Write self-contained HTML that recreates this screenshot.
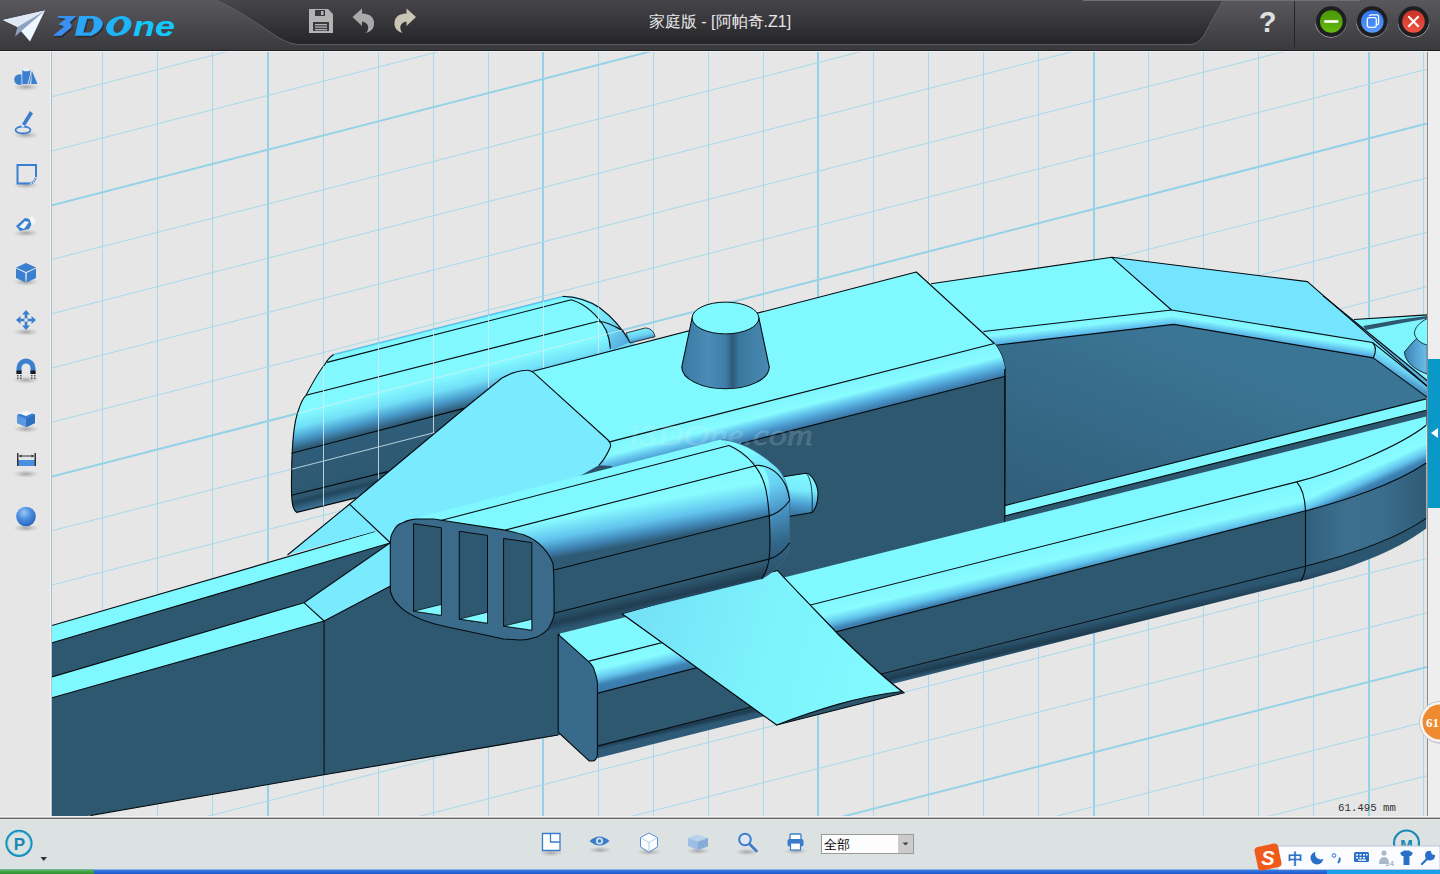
<!DOCTYPE html>
<html><head><meta charset="utf-8">
<style>
html,body{margin:0;padding:0;width:1440px;height:874px;overflow:hidden;background:#e6e6e6;font-family:"Liberation Sans",sans-serif;}
svg{position:absolute;left:0;top:0;display:block}
.g{stroke:#a6d9ea;stroke-width:1;fill:none}
.gt{stroke:#94d2e8;stroke-width:2;fill:none}
.e{stroke:#0a1a22;stroke-width:1;fill:none}
</style></head><body>
<svg width="1440" height="874" viewBox="0 0 1440 874">
<defs>
<linearGradient id="tbL" x1="0" y1="0" x2="0" y2="1"><stop offset="0" stop-color="#59585d"/><stop offset="1" stop-color="#39383c"/></linearGradient>
<linearGradient id="tbM" x1="0" y1="0" x2="0" y2="1"><stop offset="0" stop-color="#46454a"/><stop offset="0.8" stop-color="#2c2b2f"/><stop offset="1" stop-color="#252428"/></linearGradient>
<linearGradient id="logoG" x1="0" y1="0" x2="1" y2="0"><stop offset="0" stop-color="#3b74e2"/><stop offset="0.45" stop-color="#22a6f2"/><stop offset="1" stop-color="#0fd0ff"/></linearGradient>
<linearGradient id="btnG" x1="0" y1="0" x2="0" y2="1"><stop offset="0" stop-color="#4a9608"/><stop offset="1" stop-color="#66b810"/></linearGradient>
<linearGradient id="btnB" x1="0" y1="0" x2="0" y2="1"><stop offset="0" stop-color="#2f74ea"/><stop offset="1" stop-color="#5a9cff"/></linearGradient>
<linearGradient id="btnR" x1="0" y1="0" x2="0" y2="1"><stop offset="0" stop-color="#c83226"/><stop offset="1" stop-color="#f25444"/></linearGradient>
<linearGradient id="taskB" x1="0" y1="0" x2="0" y2="1"><stop offset="0" stop-color="#3a80e8"/><stop offset="1" stop-color="#1d55c8"/></linearGradient>
<linearGradient id="taskG" x1="0" y1="0" x2="0" y2="1"><stop offset="0" stop-color="#5cb85c"/><stop offset="1" stop-color="#2f8f2f"/></linearGradient>
<clipPath id="vp"><rect x="52" y="52" width="1375" height="764"/></clipPath>
<linearGradient id="gr1" gradientUnits="userSpaceOnUse" x1="1404" y1="0" x2="1427" y2="0"><stop offset="0" stop-color="#3a80b0"/><stop offset="0.6" stop-color="#5aa6d6"/><stop offset="1" stop-color="#6ac0e8"/></linearGradient>
<linearGradient id="gr2" gradientUnits="userSpaceOnUse" x1="1080" y1="320.1" x2="1081.7" y2="335.7"><stop offset="0" stop-color="#7ef6fd"/><stop offset="0.35" stop-color="#86fbff"/><stop offset="0.7" stop-color="#6ad0f4"/><stop offset="1" stop-color="#52a8e0"/></linearGradient>
<linearGradient id="gr3" gradientUnits="userSpaceOnUse" x1="1270" y1="325.9" x2="1267.7" y2="340.4"><stop offset="0" stop-color="#7ef6fd"/><stop offset="0.35" stop-color="#86fbff"/><stop offset="0.7" stop-color="#6ad0f4"/><stop offset="1" stop-color="#52a8e0"/></linearGradient>
<linearGradient id="gr4" gradientUnits="userSpaceOnUse" x1="1400" y1="360" x2="1392" y2="375"><stop offset="0" stop-color="#7ef2fc"/><stop offset="0.5" stop-color="#6ad0f2"/><stop offset="1" stop-color="#4a94c8"/></linearGradient>
<linearGradient id="gr5" gradientUnits="userSpaceOnUse" x1="1170" y1="335" x2="1100" y2="515"><stop offset="0" stop-color="#3b7595"/><stop offset="1" stop-color="#31607c"/></linearGradient>
<linearGradient id="gr6" gradientUnits="userSpaceOnUse" x1="323.7" y1="363.7" x2="358.4" y2="501.2"><stop offset="0" stop-color="#80f8ff"/><stop offset="0.3" stop-color="#84faff"/><stop offset="0.39" stop-color="#72e0f8"/><stop offset="0.47" stop-color="#4a9ccc"/><stop offset="0.54" stop-color="#305e7a"/><stop offset="0.87" stop-color="#2e5870"/><stop offset="0.9" stop-color="#22465c"/><stop offset="0.96" stop-color="#3a7090"/><stop offset="1" stop-color="#2a5068"/></linearGradient>
<linearGradient id="gr7" gradientUnits="userSpaceOnUse" x1="585" y1="302" x2="628" y2="345"><stop offset="0" stop-color="#80f8ff"/><stop offset="0.5" stop-color="#74e2f8"/><stop offset="1" stop-color="#52a8dc"/></linearGradient>
<linearGradient id="gr8" gradientUnits="userSpaceOnUse" x1="645" y1="326" x2="648" y2="340"><stop offset="0" stop-color="#80f8ff"/><stop offset="0.6" stop-color="#6ad0f4"/><stop offset="1" stop-color="#3f88b8"/></linearGradient>
<clipPath id="podclip"><path d="M333.7,354.5 L562.6,296.5 C575,296 590,301 600,308 C612,317 622,328 630,342.2 L640,345 L660,380 L540,470 L356,497.9 L296.8,512.4 C292,510 291,500 291.6,474.2 C291.8,450 293,425 298.2,411 C301,402 304,397 306,395.3 C313,382 320,370 324.5,365 Z"/></clipPath>
<linearGradient id="gr9" gradientUnits="userSpaceOnUse" x1="741" y1="408.6" x2="749.3" y2="441.4"><stop offset="0" stop-color="#7ef6fd"/><stop offset="0.38" stop-color="#88fcff"/><stop offset="0.58" stop-color="#66c8f0"/><stop offset="0.8" stop-color="#4a98cc"/><stop offset="1" stop-color="#3a72a0"/></linearGradient>
<linearGradient id="gr10" gradientUnits="userSpaceOnUse" x1="1000" y1="557.008" x2="1008" y2="590.538"><stop offset="0" stop-color="#80f8ff"/><stop offset="0.45" stop-color="#88fcff"/><stop offset="0.72" stop-color="#62c4ee"/><stop offset="0.9" stop-color="#3f84b4"/><stop offset="1" stop-color="#3a7cae"/></linearGradient>
<linearGradient id="gr11" gradientUnits="userSpaceOnUse" x1="1372" y1="452" x2="1386" y2="482"><stop offset="0" stop-color="#80f8ff"/><stop offset="0.45" stop-color="#88fcff"/><stop offset="0.72" stop-color="#62c4ee"/><stop offset="0.9" stop-color="#3f84b4"/><stop offset="1" stop-color="#3a7cae"/></linearGradient>
<linearGradient id="gr12" gradientUnits="userSpaceOnUse" x1="1305" y1="0" x2="1427" y2="0"><stop offset="0" stop-color="#30607c"/><stop offset="0.35" stop-color="#3d6f8f"/><stop offset="0.65" stop-color="#3a6c8c"/><stop offset="1" stop-color="#2e5a74"/></linearGradient>
<linearGradient id="gr13" gradientUnits="userSpaceOnUse" x1="1000" y1="643.766" x2="1003" y2="656.766"><stop offset="0" stop-color="#2c5670"/><stop offset="0.7" stop-color="#1e3c50"/><stop offset="1" stop-color="#2e5a78"/></linearGradient>
<linearGradient id="gr14" gradientUnits="userSpaceOnUse" x1="682" y1="0" x2="769" y2="0"><stop offset="0" stop-color="#3a7aa4"/><stop offset="0.3" stop-color="#4a8cb6"/><stop offset="0.5" stop-color="#3f7ea8"/><stop offset="0.58" stop-color="#2c5a78"/><stop offset="0.66" stop-color="#3a78a0"/><stop offset="1" stop-color="#4a8ab2"/></linearGradient>
<linearGradient id="gr15" gradientUnits="userSpaceOnUse" x1="640" y1="620" x2="900" y2="690"><stop offset="0" stop-color="#74e2f6"/><stop offset="0.45" stop-color="#7cf2fc"/><stop offset="1" stop-color="#82fbff"/></linearGradient>
<linearGradient id="gr16" gradientUnits="userSpaceOnUse" x1="640" y1="475" x2="652" y2="541"><stop offset="0" stop-color="#80f8ff"/><stop offset="0.42" stop-color="#88fcff"/><stop offset="0.7" stop-color="#62c4ee"/><stop offset="0.88" stop-color="#3f84b4"/><stop offset="1" stop-color="#2e5a74"/></linearGradient>
<linearGradient id="gr17" gradientUnits="userSpaceOnUse" x1="650" y1="590" x2="655" y2="612"><stop offset="0" stop-color="#2e5870"/><stop offset="0.5" stop-color="#203e52"/><stop offset="0.85" stop-color="#2c5a78"/><stop offset="1" stop-color="#4a8ab0"/></linearGradient>
<linearGradient id="gr18" gradientUnits="userSpaceOnUse" x1="800" y1="474" x2="796" y2="514"><stop offset="0" stop-color="#80f8ff"/><stop offset="0.4" stop-color="#78ecfc"/><stop offset="0.75" stop-color="#4a9ed0"/><stop offset="1" stop-color="#3a78a2"/></linearGradient>
<linearGradient id="gr19" gradientUnits="userSpaceOnUse" x1="755" y1="450" x2="790" y2="570"><stop offset="0" stop-color="#80f8ff"/><stop offset="0.3" stop-color="#6ad2f4"/><stop offset="0.5" stop-color="#4a98c8"/><stop offset="0.75" stop-color="#33688a"/><stop offset="1" stop-color="#2a5068"/></linearGradient>
</defs>
<g clip-path="url(#vp)">
<rect x="52" y="52" width="1375" height="765" fill="#e6e6e6"/>
<line x1="102.5" y1="52" x2="102.5" y2="817" class="g"/>
<line x1="157.5" y1="52" x2="157.5" y2="817" class="g"/>
<line x1="212.5" y1="52" x2="212.5" y2="817" class="g"/>
<line x1="268" y1="52" x2="268" y2="817" class="gt"/>
<line x1="323.5" y1="52" x2="323.5" y2="817" class="g"/>
<line x1="378.5" y1="52" x2="378.5" y2="817" class="g"/>
<line x1="433.5" y1="52" x2="433.5" y2="817" class="g"/>
<line x1="488.5" y1="52" x2="488.5" y2="817" class="g"/>
<line x1="543" y1="52" x2="543" y2="817" class="gt"/>
<line x1="598.5" y1="52" x2="598.5" y2="817" class="g"/>
<line x1="653.5" y1="52" x2="653.5" y2="817" class="g"/>
<line x1="708.5" y1="52" x2="708.5" y2="817" class="g"/>
<line x1="763.5" y1="52" x2="763.5" y2="817" class="g"/>
<line x1="818" y1="52" x2="818" y2="817" class="gt"/>
<line x1="873.5" y1="52" x2="873.5" y2="817" class="g"/>
<line x1="928.5" y1="52" x2="928.5" y2="817" class="g"/>
<line x1="983.5" y1="52" x2="983.5" y2="817" class="g"/>
<line x1="1038.5" y1="52" x2="1038.5" y2="817" class="g"/>
<line x1="1094" y1="52" x2="1094" y2="817" class="gt"/>
<line x1="1148.5" y1="52" x2="1148.5" y2="817" class="g"/>
<line x1="1203.5" y1="52" x2="1203.5" y2="817" class="g"/>
<line x1="1258.5" y1="52" x2="1258.5" y2="817" class="g"/>
<line x1="1313.5" y1="52" x2="1313.5" y2="817" class="g"/>
<line x1="1369" y1="52" x2="1369" y2="817" class="gt"/>
<line x1="1423.5" y1="52" x2="1423.5" y2="817" class="g"/>
<line x1="52" y1="42.45" x2="1427" y2="-311.23" class="g"/>
<line x1="52" y1="96.70" x2="1427" y2="-256.88" class="g"/>
<line x1="52" y1="150.95" x2="1427" y2="-202.53" class="g"/>
<line x1="52" y1="205.20" x2="1427" y2="-148.18" class="gt"/>
<line x1="52" y1="259.45" x2="1427" y2="-93.83" class="g"/>
<line x1="52" y1="313.70" x2="1427" y2="-39.48" class="g"/>
<line x1="52" y1="367.95" x2="1427" y2="14.87" class="g"/>
<line x1="52" y1="422.20" x2="1427" y2="69.22" class="g"/>
<line x1="52" y1="476.45" x2="1427" y2="123.57" class="gt"/>
<line x1="52" y1="530.70" x2="1427" y2="177.92" class="g"/>
<line x1="52" y1="584.95" x2="1427" y2="232.27" class="g"/>
<line x1="52" y1="639.20" x2="1427" y2="286.62" class="g"/>
<line x1="52" y1="693.45" x2="1427" y2="340.97" class="g"/>
<line x1="52" y1="747.70" x2="1427" y2="395.32" class="gt"/>
<line x1="52" y1="801.95" x2="1427" y2="449.67" class="g"/>
<line x1="52" y1="856.20" x2="1427" y2="504.02" class="g"/>
<line x1="52" y1="910.45" x2="1427" y2="558.37" class="g"/>
<line x1="52" y1="964.70" x2="1427" y2="612.72" class="g"/>
<line x1="52" y1="1018.95" x2="1427" y2="667.07" class="gt"/>
<line x1="52" y1="1073.20" x2="1427" y2="721.42" class="g"/>
<line x1="52" y1="1127.45" x2="1427" y2="775.77" class="g"/>
<line x1="52" y1="1181.70" x2="1427" y2="830.12" class="g"/>
<polygon points="1354.0,319.5 1427.3,314.9 1427.3,381.0 1340.0,309.0" fill="#7ef4fd" />
<polygon points="1363.0,326.0 1400.0,319.5 1427.3,316.0 1427.3,318.5 1402.0,323.0 1366.0,330.0" fill="#2e5870" />
<path d="M1427.3,333 C1418,335 1413,342 1404.4,352 C1405,362 1415,370 1427.3,374 Z" fill="url(#gr1)" stroke="#050c10" stroke-width="0.8" />
<path d="M1427.3,318.6 C1420,322 1414,328 1414.5,334 C1416,340 1422,344 1427.3,345" fill="#80f8ff" stroke="#050c10" stroke-width="0.8" />
<polygon points="1307.4,281.6 1323.0,295.7 1427.3,380.8 1427.3,386.3" fill="#5aaedc" />
<polygon points="1004.7,505.6 1427.0,398.6 1427.0,425.0 1004.7,530.0" fill="#2e5870" />
<polygon points="931.0,283.8 1111.8,257.3 1307.4,281.6 1427.3,386.3 1427.3,398.0 1373.0,358.0 996.0,346.5 992.0,342.0" fill="#76e8fc" />
<polygon points="931.0,283.8 1111.8,257.3 1171.5,310.0 984.0,330.6 960.0,320.0" fill="#80f8ff" />
<polygon points="1111.8,257.3 1307.4,281.6 1427.3,386.3 1372.4,342.4 1171.5,310.0" fill="#74e4ff" />
<polygon points="983.5,331.5 1171.5,310.0 1173.6,324.4 996.0,345.2" fill="url(#gr2)" />
<path d="M1171.5,310 L1372.4,342.4 C1376,346 1376,352 1373.3,357.9 L1173.6,324.4 Z" fill="url(#gr3)" />
<polygon points="1372.4,342.4 1427.3,386.3 1427.3,397.3 1373.3,357.9" fill="url(#gr4)" />
<path d="M994.3,343.5 L996,345.2 L1173.6,324.4 L1373.3,357.9 L1427.3,397.3 L1426.2,398.9 L1004.7,505.6 L1005.2,368.6 C1004,360 1000,350 994.3,343.5 Z" fill="url(#gr5)" />
<polygon points="1004.7,505.6 1426.2,398.9 1426.2,410.2 1004.7,516.0" fill="#80f8ff" />
<polyline points="931.0,283.8 1111.8,257.3 1307.4,281.6 1427.3,386.3" fill="none" stroke="#050c10" stroke-width="1.1" stroke-linejoin="round"/>
<polyline points="1323.0,295.7 1427.3,380.8" fill="none" stroke="#050c10" stroke-width="1.1" stroke-linejoin="round"/>
<polyline points="1354.0,319.5 1427.3,314.9" fill="none" stroke="#050c10" stroke-width="1.1" stroke-linejoin="round"/>
<polyline points="1111.8,257.3 1171.5,310.0 983.5,331.5" fill="none" stroke="#050c10" stroke-width="1.1" stroke-linejoin="round"/>
<path d="M1171.5,310 L1372.4,342.4 C1376,346 1376,352 1373.3,357.9 L1427.3,397.3" fill="none" stroke="#050c10" stroke-width="1.1" />
<polyline points="1372.4,342.4 1427.3,386.3" fill="none" stroke="#050c10" stroke-width="1.1" stroke-linejoin="round"/>
<polyline points="1004.7,516.0 1005.2,369.0" fill="none" stroke="#050c10" stroke-width="1.1" stroke-linejoin="round"/>
<polyline points="996.0,345.2 1173.6,324.4 1373.3,357.9" fill="none" stroke="#050c10" stroke-width="1.1" stroke-linejoin="round"/>
<path d="M994.3,343.5 C1000,350 1004,360 1005.2,368.6 L1005.2,376.4" fill="none" stroke="#050c10" stroke-width="1.1" />
<polyline points="1004.7,505.6 1426.2,398.9" fill="none" stroke="#050c10" stroke-width="1.1" stroke-linejoin="round"/>
<polyline points="1004.7,516.0 1426.2,410.2" fill="none" stroke="#050c10" stroke-width="1.1" stroke-linejoin="round"/>
<path d="M333.7,354.5 L562.6,296.5 C575,296 590,301 600,308 C612,317 622,328 630,342.2 L640,345 L660,380 L540,470 L356,497.9 L296.8,512.4 C292,510 291,500 291.6,474.2 C291.8,450 293,425 298.2,411 C301,402 304,397 306,395.3 C313,382 320,370 324.5,365 Z" fill="url(#gr6)" />
<path d="M562.6,296.5 C575,296 590,301 600,308 C612,317 622,328 630,342.2 L612,350 C610,343 609,337 606,330 C598,315 585,304 571.3,299.8 Z" fill="url(#gr7)" />
<path d="M333.7,354.5 L562.6,296.5 C575,296 590,301 600,308" fill="none" stroke="#5cc4ee" stroke-width="1.6" />
<polyline points="327.0,362.4 571.3,299.8" fill="none" stroke="#050c10" stroke-width="1.1" stroke-linejoin="round"/>
<path d="M571.3,299.8 C585,304 598,315 606,330 C609,337 610,343 610.4,348.7" fill="none" stroke="#050c10" stroke-width="1.1" />
<polyline points="306.0,395.3 597.4,321.5" fill="none" stroke="#050c10" stroke-width="1.1" stroke-linejoin="round"/>
<path d="M597.4,321.5 C606,321 615,326 623.5,331.3" fill="none" stroke="#050c10" stroke-width="1.1" />
<polyline points="291.6,453.2 464.0,408.4" fill="none" stroke="#050c10" stroke-width="1.1" stroke-linejoin="round"/>
<polyline points="291.6,495.3 387.6,471.6" fill="none" stroke="#050c10" stroke-width="1.1" stroke-linejoin="round"/>
<path d="M562.6,296.5 C575,296 590,301 600,308 C612,317 622,328 630,342.2 M333.7,354.5 C328,358 326,362 324.5,365 C320,370 313,382 306,395.3 C304,397 301,402 298.2,411 C293,425 291.8,450 291.6,474.2 C291,500 292,510 296.8,512.4 L356,497.9" fill="none" stroke="#050c10" stroke-width="1.1" />
<path d="M626,333 L645.2,328 C650,328 654,331 655,336.7 L630,343 Z" fill="url(#gr8)" stroke="#050c10" stroke-width="0.8" />
<g clip-path="url(#podclip)" stroke="#d8eef4" stroke-width="1" opacity="0.8"><line x1="323.50" y1="280" x2="323.50" y2="520"/><line x1="378.50" y1="280" x2="378.50" y2="520"/><line x1="433.50" y1="280" x2="433.50" y2="520"/><line x1="488.50" y1="280" x2="488.50" y2="520"/><line x1="543.50" y1="280" x2="543.50" y2="520"/><line x1="598.50" y1="280" x2="598.50" y2="520"/><line x1="52" y1="367.95" x2="700" y2="201.55"/><line x1="52" y1="422.20" x2="700" y2="255.85"/><line x1="52" y1="476.45" x2="700" y2="310.15"/><line x1="52" y1="530.70" x2="700" y2="364.44"/><line x1="52" y1="584.95" x2="700" y2="418.74"/></g>
<polygon points="560.0,470.0 1005.0,376.0 1005.0,525.0 850.0,563.4 560.0,640.0" fill="#2e5870" />
<polygon points="500.0,380.0 916.3,272.0 994.3,343.5 560.0,455.0 500.0,470.0" fill="#80f8ff" />
<path d="M560,455 L994.3,343.5 C1000,350 1004,360 1005.2,368.6 L1005.5,376.2 L741,443.5 L560,490 Z" fill="url(#gr9)" />
<polyline points="532.0,371.5 916.3,272.0 994.3,343.5" fill="none" stroke="#050c10" stroke-width="1.1" stroke-linejoin="round"/>
<polyline points="609.6,441.9 994.3,343.5" fill="none" stroke="#050c10" stroke-width="1.1" stroke-linejoin="round"/>
<polyline points="1004.7,369.0 1004.7,525.0" fill="none" stroke="#050c10" stroke-width="1.1" stroke-linejoin="round"/>
<polyline points="741.0,443.5 1005.5,376.2" fill="none" stroke="#050c10" stroke-width="1.1" stroke-linejoin="round"/>
<text x="629" y="445" font-family="Liberation Serif" font-style="italic" font-size="29" fill="#ffffff" fill-opacity="0.12" stroke="#e0f0f4" stroke-opacity="0.14" stroke-width="0.8" textLength="184" lengthAdjust="spacingAndGlyphs">i3DOne.com</text>
<path d="M558,634.0 L1426.2,416.5 L1426.2,425.3 C1400,446 1340,471 1296.7,481.9 L589,661.1 L558,668.9 Z" fill="#80f8ff" />
<path d="M589,661.1 L1296.7,481.9 C1340,471 1400,446 1426.2,425.3 L1426.2,463 C1395,484 1345,501 1305.5,510.8 L597,693.4 Z" fill="url(#gr10)" />
<path d="M1296.7,481.9 C1340,471 1400,446 1426.2,425.3 L1426.2,463 C1395,484 1345,501 1305.5,510.8 Z" fill="url(#gr11)" />
<path d="M597,693.4 L1305.5,510.8 C1345,501 1395,484 1426.2,463 L1426.2,518.4 C1395,540 1345,556 1305.5,566.2 L597,746.1 Z" fill="#2e5870" />
<path d="M1305.5,510.8 C1345,501 1395,484 1426.2,463 L1426.2,518.4 C1395,540 1345,556 1305.5,566.2 Z" fill="url(#gr12)" />
<path d="M597,746.1 L1305.5,566.2 C1345,556 1395,540 1426.2,518.4 L1426.2,528.4 C1395,552 1345,570 1300.4,581.3 L597,758.3 Z" fill="url(#gr13)" />
<path d="M589,661.1 L1296.7,481.9 C1340,471 1400,446 1426.2,425.3" fill="none" stroke="#050c10" stroke-width="1.1" />
<path d="M597,693.4 L1305.5,510.8 C1345,501 1395,484 1426.2,463" fill="none" stroke="#050c10" stroke-width="1.1" />
<path d="M597,746.1 L1305.5,566.2 C1345,556 1395,540 1426.2,518.4" fill="none" stroke="#050c10" stroke-width="1.1" />
<path d="M1296.7,481.9 C1302,488 1305,498 1305.5,510.8 L1305.5,566.2 C1305,573 1303,578 1300.4,581.3" fill="none" stroke="#050c10" stroke-width="1.1" />
<polygon points="52.0,625.5 375.3,531.3 390.0,543.0 52.0,642.8" fill="#80f8ff" />
<polygon points="52.0,642.8 390.0,543.0 303.9,602.7 52.0,676.9" fill="#2e5870" />
<polygon points="303.9,602.7 390.0,543.0 400.0,560.0 390.0,586.2 324.1,621.0" fill="#7aeaff" />
<polygon points="52.0,676.9 303.9,602.7 324.1,621.0 52.0,697.7" fill="#80f8ff" />
<polygon points="52.0,697.7 324.1,621.0 324.1,774.8 90.3,815.6 52.0,822.0" fill="#2e5870" />
<polygon points="324.1,621.0 390.0,586.2 560.0,540.0 560.0,735.0 324.1,774.8" fill="#2e5870" />
<polyline points="52.0,625.5 375.3,531.3" fill="none" stroke="#050c10" stroke-width="1.1" stroke-linejoin="round"/>
<polyline points="52.0,642.8 390.0,543.0" fill="none" stroke="#050c10" stroke-width="1.1" stroke-linejoin="round"/>
<polyline points="52.0,676.9 303.9,602.7 390.0,543.0" fill="none" stroke="#050c10" stroke-width="1.1" stroke-linejoin="round"/>
<polyline points="52.0,697.7 324.1,621.0 390.0,586.2" fill="none" stroke="#050c10" stroke-width="1.1" stroke-linejoin="round"/>
<polyline points="303.9,602.7 324.1,621.0 324.1,774.8" fill="none" stroke="#050c10" stroke-width="1.1" stroke-linejoin="round"/>
<polyline points="90.3,815.6 324.1,774.8 558.0,735.0" fill="none" stroke="#050c10" stroke-width="1.1" stroke-linejoin="round"/>
<path d="M287.5,555 L349.5,504.2 L465,408 L501.6,378.3 C510,373 518,371 526.8,370.3 C529,370 531,371 533.7,372.6 L608,440 C611,443 611,445 610.3,447 C607,455 603,461 598.9,465.3 L574.9,479 L500,530 L390.6,543 L375.3,531.3 Z" fill="#7aeaff" />
<path d="M287.5,555 L349.5,504.2 L465,408 L501.6,378.3 C510,373 518,371 526.8,370.3 C529,370 531,371 533.7,372.6 L608,440 C611,443 611,445 610.3,447 C607,455 603,461 598.9,465.3" fill="none" stroke="#050c10" stroke-width="1.1" />
<polyline points="349.5,504.2 390.6,543.0" fill="none" stroke="#050c10" stroke-width="1.1" stroke-linejoin="round"/>
<polygon points="574.9,479.0 598.9,465.3 612.0,466.0 612.0,470.0 580.0,478.0" fill="#2a5068" />
<path d="M692.1,318 L681.75,367 A43.75,21.75 0 0 0 769.25,367 L758.9,318 Z" fill="url(#gr14)" stroke="#050c10" stroke-width="1.1" />
<ellipse cx="725.5" cy="318" rx="33.4" ry="15.9" fill="#80f8ff" stroke="#050c10" stroke-width="1"/>
<path d="M558.2,634.3 L589.2,662.1 C592,665 594,668 594.3,670.4 C596,675 597,679 597.4,682.7 L597.4,754.8 C597,758 595,761 593.3,761 L589.2,761 L558.2,732.2 Z" fill="#386a8c" stroke="#050c10" stroke-width="1.1" />
<path d="M622,613.7 L777.4,570.5 C800,595 820,615 838.3,634.5 C860,655 880,675 904,692.8 L776.7,725 Z" fill="#2e5870" stroke="#050c10" stroke-width="1.1" />
<path d="M622,613.7 L777.4,570.5 C800,595 820,615 838.3,634.5 C860,655 880,675 902,691.5 C880,694 860,698 837.8,704.4 C815,711 795,718 776.7,725 Z" fill="url(#gr15)" stroke="#050c10" stroke-width="1.1" />
<polygon points="417.0,517.5 721.0,439.6 757.5,465.2 505.7,529.9" fill="#80f8ff" />
<polygon points="505.7,529.9 757.5,465.2 775.0,470.0 786.0,486.0 789.7,500.5 769.6,515.6 554.1,570.0 553.0,563.9 542.8,547.4 524.2,535.0" fill="url(#gr16)" />
<polygon points="554.1,570.0 769.6,515.6 781.6,510.5 789.7,500.5 789.7,542.8 781.6,552.8 769.6,558.9 554.1,613.3" fill="#2e5870" />
<polygon points="554.1,613.3 769.6,558.9 781.6,552.8 789.7,542.8 786.7,554.9 775.6,569.0 761.5,579.0 620.0,614.0 544.8,633.9" fill="url(#gr17)" />
<path d="M775,478 L806,473.3 C812,474 818,485 818,494 C818,503 815,510 812,512.6 L780,518 Z" fill="url(#gr18)" stroke="#050c10" stroke-width="1.1" />
<path d="M806,473.3 C811,478 813,490 812,512.6" fill="none" stroke="#050c10" stroke-width="0.8" />
<path d="M721,439.6 C740,441 760,452 777.6,468.3 C784,475 788,486 789.7,498.5 L789.7,542.8 C789,548 788,552 786.7,554.9 C783,562 779,566 775.6,569 C770,574 765,577 761.5,579 C766,570 770,560 770,540 L770,500 C770,480 768,468 757.5,465.2 Z" fill="url(#gr19)" />
<path d="M721,439.6 C740,441 760,452 777.6,468.3 C784,475 788,486 789.7,498.5 L789.7,542.8 C789,548 788,552 786.7,554.9 C783,562 779,566 775.6,569 C770,574 765,577 761.5,579" fill="none" stroke="#3a6a88" stroke-width="0.8" />
<path d="M729,445.5 C747,453 762,470 766,490 C769,505 770,520 770,540 C770,560 768,570 761.5,579" fill="none" stroke="#050c10" stroke-width="1.1" />
<polyline points="437.0,521.5 729.0,445.5" fill="none" stroke="#050c10" stroke-width="1.1" stroke-linejoin="round"/>
<polyline points="505.7,529.9 757.5,465.2" fill="none" stroke="#050c10" stroke-width="1.1" stroke-linejoin="round"/>
<path d="M757.5,465.2 C770,466 780,474 786,486 C788,491 789,496 789.7,500.5" fill="none" stroke="#050c10" stroke-width="1.1" />
<polyline points="554.1,570.0 769.6,515.6" fill="none" stroke="#050c10" stroke-width="1.1" stroke-linejoin="round"/>
<path d="M769.6,515.6 C776,514 784,508 789.7,500.5" fill="none" stroke="#050c10" stroke-width="1.1" />
<polyline points="554.1,613.3 769.6,558.9" fill="none" stroke="#050c10" stroke-width="1.1" stroke-linejoin="round"/>
<path d="M769.6,558.9 C777,557 785,550 789.7,542.8" fill="none" stroke="#050c10" stroke-width="1.1" />
<path d="M390.3,543.3 C390.5,538 391,535 392.4,533 C396,526 398,524 402.7,522.7 C408,520 412,519 417.1,519 L433.6,519 L503.6,529.9 C510,531 517,533 524.2,535 C532,538 538,542 542.8,547.4 C548,553 551,558 553,563.9 C554,572 554,580 554.1,600 L554.1,615.4 C553,620 551,624 548.9,627.7 C546,632 541,635 536.6,637 C531,639 526,640 520,640 L503.6,639 L441.8,625.7 C434,624 428,622 421.2,619.5 C413,616 407,613 402.7,609.2 C398,605 394,601 392.4,596.8 C391,594 390.5,592 390.3,590.6 Z" fill="#3a6b8b" stroke="#050c10" stroke-width="1.1" />
<polygon points="413.6,523.7 441.4,527.8 441.4,615.4 413.6,611.2" fill="#2e5870" stroke="#050c10" stroke-width="1"/>
<polygon points="413.6,611.2 441.4,604.4 441.4,615.4" fill="#80f8ff" stroke="#050c10" stroke-width="0.8"/>
<polygon points="459.3,531.3 487.5,535.4 487.5,623.2 459.3,619.1" fill="#2e5870" stroke="#050c10" stroke-width="1"/>
<polygon points="459.3,619.1 487.5,612.2 487.5,623.2" fill="#80f8ff" stroke="#050c10" stroke-width="0.8"/>
<polygon points="503.6,538.5 531.8,542.6 531.8,630.2 503.6,626.1" fill="#2e5870" stroke="#050c10" stroke-width="1"/>
<polygon points="503.6,626.1 531.8,619.2 531.8,630.2" fill="#80f8ff" stroke="#050c10" stroke-width="0.8"/>
</g>
<!-- title bar -->
<rect x="0" y="0" width="1440" height="51" fill="url(#tbL)"/>
<path d="M216 0 C235 8 255 22 270 32 C280 39 288 43.5 298 44.5 H1189 Q1197 44.5 1203 37 L1223 0 Z" fill="url(#tbM)"/>
<path d="M216 0 C235 8 255 22 270 32 C280 39 288 43.5 298 44.5 H1189 Q1197 44.5 1203 37 L1223 0" fill="none" stroke="#5e5d62" stroke-width="1"/>
<rect x="0" y="50" width="1440" height="1" fill="#1e1d20"/>
<rect x="1083" y="0" width="277" height="1" fill="#6c7078"/>
<line x1="1294.5" y1="1" x2="1294.5" y2="47" stroke="#242327" stroke-width="1"/>
<!-- logo airplane -->
<polygon points="3,20 45,10.5 30,41.5 17.5,27" fill="#eef6ff"/>
<polygon points="3,20 45,10.5 17.5,27" fill="#dfe9f5"/>
<polygon points="17.5,27 45,10.5 15,36.5" fill="#8fa2bd"/>
<g opacity="0.45" transform="translate(1.2 1.8)" fill="#151417">
<path d="M57.7,16 H76.25 L69.6,22.4 Q72.5,24 71.25,27.4 L61.25,35.75 H52.7 L63.75,27 Q63,25.5 58.3,24.5 L65.8,18.7 L58.3,17.8 Z"/>
<path d="M79.2,16 H93.3 Q101.5,17 102.9,23.7 Q102,31 91.7,35.75 H75 Z M87.1,18.7 L83.3,32.4 H90 Q94.5,29 93.75,23.5 Q94,18.7 91.7,18.7 Z" fill-rule="evenodd"/>
</g>
<path d="M57.7,16 H76.25 L69.6,22.4 Q72.5,24 71.25,27.4 L61.25,35.75 H52.7 L63.75,27 Q63,25.5 58.3,24.5 L65.8,18.7 L58.3,17.8 Z" fill="#3a90f0"/>
<path d="M79.2,16 H93.3 Q101.5,17 102.9,23.7 Q102,31 91.7,35.75 H75 Z M87.1,18.7 L83.3,32.4 H90 Q94.5,29 93.75,23.5 Q94,18.7 91.7,18.7 Z" fill="#2aa6f8" fill-rule="evenodd"/>
<g transform="translate(118.8 26.1) skewX(-16)"><path d="M0,-10 A12.3,10 0 1 1 0,10 A12.3,10 0 1 1 0,-10 Z M0,-7 A5,7 0 1 0 0,7 A5,7 0 1 0 0,-7 Z" fill="#1cb6f8" fill-rule="evenodd"/></g>
<text x="133" y="35.8" font-family="Liberation Sans" font-weight="bold" font-style="italic" font-size="28" fill="#12c8fd" textLength="42" lengthAdjust="spacingAndGlyphs">ne</text>
<!-- save -->
<path d="M309 9 H328 L333 14 V33 H309 Z" fill="#b3b3b3"/>
<rect x="315" y="10" width="10" height="6" fill="#3a393d"/>
<rect x="321" y="11" width="2.5" height="4" fill="#b3b3b3"/>
<rect x="313" y="22" width="16" height="9" fill="#3a393d"/>
<rect x="315" y="24" width="12" height="1.3" fill="#b3b3b3"/><rect x="315" y="26.5" width="12" height="1.3" fill="#b3b3b3"/><rect x="315" y="29" width="12" height="1.3" fill="#b3b3b3"/>
<!-- undo -->
<path d="M352.5 17 L362 8.5 V13.5 Q375 14 374 25 Q373 31 366 33 Q370 28 367 24 Q365 21.5 362 21.5 V26 Z" fill="#a9a9a9"/>
<!-- redo -->
<path d="M416 17 L406.5 8.5 V13.5 Q393.5 14 394.5 25 Q395.5 31 402.5 33 Q398.5 28 401.5 24 Q403.5 21.5 406.5 21.5 V26 Z" fill="#c9c6b4"/>
<text x="720" y="27" text-anchor="middle" font-family="Liberation Sans" font-size="16" fill="#e6e6e6">家庭版 - [阿帕奇.Z1]</text>
<text x="1267.5" y="32" text-anchor="middle" font-family="Liberation Sans" font-weight="bold" font-size="29" fill="#e0e0e0">?</text>
<!-- window buttons -->
<g fill="none" stroke="#9a999e" stroke-width="1">
<path d="M1315.5,23.5 A15.6,15.6 0 0 0 1346.5,23.5"/>
<path d="M1356.5,23.5 A15.6,15.6 0 0 0 1387.5,23.5"/>
<path d="M1398,23.5 A15.6,15.6 0 0 0 1429,23.5"/>
</g>
<circle cx="1331.3" cy="21.5" r="15.2" fill="#1f1e21"/>
<circle cx="1331.3" cy="21.5" r="11.3" fill="url(#btnG)"/>
<rect x="1324.3" y="20.2" width="14" height="2.6" fill="#fff"/>
<circle cx="1372.3" cy="21.5" r="15.2" fill="#1f1e21"/>
<circle cx="1372.3" cy="21.5" r="11.3" fill="url(#btnB)"/>
<rect x="1367.3" y="17.6" width="9" height="9.8" rx="1.8" fill="none" stroke="#fff" stroke-width="1.3"/>
<path d="M1369.5,16 V15.8 Q1369.5,14.8 1371,14.8 H1377 Q1378.6,14.8 1378.6,16.4 V23 Q1378.6,24.6 1377,24.6" fill="none" stroke="#fff" stroke-width="1.3"/>
<circle cx="1413.5" cy="21.5" r="15.2" fill="#1f1e21"/>
<circle cx="1413.5" cy="21.5" r="11.3" fill="url(#btnR)"/>
<path d="M1408.3 16.3 L1418.7 26.7 M1418.7 16.3 L1408.3 26.7" stroke="#fff" stroke-width="2"/>
<!-- left panel -->
<rect x="0" y="51" width="51" height="767" fill="#e6e6e6"/>
<line x1="50.5" y1="52" x2="50.5" y2="817" stroke="#f4f4f4" stroke-width="1"/>
<line x1="51.5" y1="52" x2="51.5" y2="817" stroke="#a9c0cc" stroke-width="1"/>
<rect x="0" y="51" width="1440" height="1" fill="#f2f2f2"/>
<!-- right panel -->
<rect x="1427" y="51" width="13" height="767" fill="#eeeeee"/>
<line x1="1427.5" y1="52" x2="1427.5" y2="817" stroke="#8a8a8a" stroke-width="1"/>
<rect x="1428" y="359" width="12" height="149" fill="#0a98c8"/>
<polygon points="1431,433 1438,428 1438,438" fill="#fff"/>
<!-- bottom bar -->
<rect x="0" y="816" width="1440" height="1.6" fill="#f4f4f4"/>
<rect x="0" y="817.6" width="1440" height="1.4" fill="#6b6b6b"/>
<rect x="0" y="819.5" width="1440" height="50.5" fill="#dce1e2"/>
<!-- taskbar -->
<rect x="0" y="869.5" width="1440" height="4.5" fill="url(#taskB)"/>
<rect x="0" y="869.5" width="94" height="4.5" fill="url(#taskG)"/>
<rect x="1327" y="869.5" width="113" height="4.5" fill="#1aa0e8"/>

<defs>
<radialGradient id="shd" cx="0.5" cy="0.5" r="0.5"><stop offset="0" stop-color="#9a9a9a" stop-opacity="0.85"/><stop offset="1" stop-color="#b0b0b0" stop-opacity="0"/></radialGradient>
<radialGradient id="sph" cx="0.4" cy="0.3" r="0.7"><stop offset="0" stop-color="#9cc8f4"/><stop offset="0.5" stop-color="#4a8ee0"/><stop offset="1" stop-color="#2a66b8"/></radialGradient>
</defs>
<!-- left toolbar shadows -->
<g fill="url(#shd)">
<ellipse cx="26" cy="87" rx="13" ry="4"/>
<ellipse cx="26" cy="135" rx="13" ry="4"/>
<ellipse cx="26" cy="185" rx="13" ry="4"/>
<ellipse cx="26" cy="233" rx="13" ry="4"/>
<ellipse cx="26" cy="282" rx="13" ry="4"/>
<ellipse cx="26" cy="332" rx="13" ry="4"/>
<ellipse cx="26" cy="380" rx="13" ry="4"/>
<ellipse cx="26" cy="429" rx="13" ry="4"/>
<ellipse cx="26" cy="474" rx="13" ry="4"/>
<ellipse cx="26" cy="528" rx="13" ry="4"/>
</g>
<g fill="#3b7fd0">
<!-- 1 shapes -->
<circle cx="19.5" cy="79.5" r="5.3"/>
<rect x="21.5" y="69.5" width="9" height="14.5" fill="#e6e6e6"/>
<rect x="22.3" y="69.5" width="8" height="14.5"/>
<ellipse cx="26.3" cy="69.5" rx="4" ry="1.8" fill="#e8f0fa"/>
<polygon points="31.5,70 37.5,84 27.5,84" fill="#e6e6e6"/>
<polygon points="32,71 37.5,84 28.5,84"/>
<polygon points="30,84 31.8,73 31.2,84" fill="#f0f6fc"/>
<!-- 2 pencil -->
<ellipse cx="23" cy="130" rx="7.5" ry="3.5" fill="none" stroke="#3b7fd0" stroke-width="1.8"/>
<polygon points="30,111 33,113.5 25,126 21.5,128 22,124"/>
<polygon points="22,124 25,126 21.5,128" fill="#e8f0fa"/>
<!-- 3 square with rounded corner -->
<path d="M17.5 165 H36 V177 Q35 183 29 183.5 H17.5 Z" fill="none" stroke="#3b7fd0" stroke-width="2"/>
<path d="M36 177 Q35 183 29 183.5" fill="none" stroke="#c8d8ea" stroke-width="2" stroke-dasharray="1.5 1"/>
<!-- 4 eraser -->
<polygon points="16,226 25,218 34,220 29,229 20,231"/>
<polygon points="19,227 25,221 29,222 24,229" fill="#f2f6fb"/>
<polygon points="29,218 33,216 36,222 32,226" fill="#f2f6fb"/>
<!-- 5 cube -->
<polygon points="26,263 36,267.5 26,272 16,267.5"/>
<polygon points="16,268.5 25.3,273 25.3,282.5 16,278"/>
<polygon points="26.7,273 36,268.5 36,278 26.7,282.5"/>
<!-- 6 move arrows -->
<path d="M26 310 L30 314.5 H27.3 V318.7 H31.5 V316 L36 320 L31.5 324 V321.3 H27.3 V325.5 H30 L26 330 L22 325.5 H24.7 V321.3 H20.5 V324 L16 320 L20.5 316 V318.7 H24.7 V314.5 H22 Z"/>
<circle cx="26" cy="320" r="1.8" fill="#e6e6e6"/>
<!-- 7 magnet -->
<path d="M16.5 374 V368 A9.5 9.5 0 0 1 35.5 368 V374 H30.5 V368 A4.5 4.5 0 0 0 21.5 368 V374 Z"/>
<rect x="16.5" y="370.5" width="5" height="3.5" fill="#1a1a1a"/>
<rect x="30.5" y="370.5" width="5" height="3.5" fill="#1a1a1a"/>
<g fill="#555"><rect x="17" y="375" width="1.5" height="1.5"/><rect x="20" y="375" width="1.5" height="1.5"/><rect x="31" y="375" width="1.5" height="1.5"/><rect x="34" y="375" width="1.5" height="1.5"/><rect x="17" y="377.5" width="1.5" height="1.5"/><rect x="20" y="377.5" width="1.5" height="1.5"/><rect x="31" y="377.5" width="1.5" height="1.5"/><rect x="34" y="377.5" width="1.5" height="1.5"/></g>
<!-- 8 box -->
<polygon points="17,415 26,411 35,414.5 35,423 27,427 17,423"/>
<polygon points="17,415 26,419 26,427 17,423" fill="#5a9ae0"/>
<polygon points="19,413.5 26,410.5 33,413 26,416" fill="#f4f8fc"/>
<polygon points="26,419 35,414.5 35,423 26,427" fill="#2e70c0"/>
<!-- 9 ruler -->
<rect x="17" y="460" width="19" height="6" fill="#4a90e0"/>
<rect x="17" y="453" width="1.5" height="13" fill="#333"/>
<rect x="34.5" y="453" width="1.5" height="13" fill="#333"/>
<line x1="19" y1="456" x2="34" y2="456" stroke="#333" stroke-width="1"/>
<polygon points="19,456 21.5,454.5 21.5,457.5" fill="#333"/><polygon points="34,456 31.5,454.5 31.5,457.5" fill="#333"/>
<!-- 10 sphere -->
<circle cx="26" cy="516.5" r="9.8" fill="url(#sph)"/>
</g>
<!-- bottom toolbar -->
<g fill="url(#shd)">
<ellipse cx="551" cy="853" rx="12" ry="3.5"/>
<ellipse cx="600" cy="850" rx="12" ry="3.5"/>
<ellipse cx="649" cy="852" rx="12" ry="3.5"/>
<ellipse cx="698" cy="851" rx="12" ry="3.5"/>
<ellipse cx="747" cy="852" rx="12" ry="3.5"/>
<ellipse cx="796" cy="851" rx="12" ry="3.5"/>
</g>
<!-- P icon -->
<circle cx="19" cy="843.3" r="12.5" fill="none" stroke="#1a8ab8" stroke-width="2.2"/>
<circle cx="19" cy="843.3" r="11.5" fill="none" stroke="#62d0f0" stroke-width="0.8"/>
<text x="19.3" y="849.5" text-anchor="middle" font-family="Liberation Sans" font-weight="bold" font-size="17" fill="#1a88b0">P</text>
<polygon points="40.5,857 47,857 43.7,861" fill="#333"/>
<!-- square corner icon -->
<path d="M542.5 833.5 H560 V850.5 H542.5 Z" fill="#fff" stroke="#3a7ccc" stroke-width="1.3"/>
<path d="M550.5 833.5 V842 H560" fill="none" stroke="#3a7ccc" stroke-width="1.3"/>
<!-- eye -->
<path d="M589.5 841 Q599.5 832 609.5 841 Q599.5 850 589.5 841 Z" fill="#3a7ccc"/>
<circle cx="599.5" cy="841" r="3.6" fill="#d0dff0"/>
<circle cx="599.5" cy="841" r="1.8" fill="#3a7ccc"/>
<!-- wire cube -->
<polygon points="649,833 657.5,837.5 657.5,847 649,852 640.5,847 640.5,837.5" fill="#fbfdff" stroke="#5a90d0" stroke-width="1"/>
<path d="M649 842.5 V852 M649 842.5 L640.5 837.5 M649 842.5 L657.5 837.5" stroke="#9cc0e8" stroke-width="0.8"/>
<!-- solid cube -->
<polygon points="688,838 697,834.5 708,838 698,841.5" fill="#b8d2ee"/>
<polygon points="688,838 698,841.5 698,850 688,846" fill="#9cbde4"/>
<polygon points="698,841.5 708,838 708,846.5 698,850" fill="#88acd8"/>
<!-- magnifier -->
<circle cx="745" cy="839.5" r="5.8" fill="#dfe8f2" stroke="#3a7ccc" stroke-width="2"/>
<line x1="749.5" y1="844" x2="756.5" y2="851" stroke="#3a7ccc" stroke-width="2.6" stroke-linecap="round"/>
<!-- printer -->
<rect x="790" y="834" width="11" height="6" rx="1" fill="#fff" stroke="#3a7ccc" stroke-width="1.3"/>
<rect x="787.5" y="839" width="16" height="7.5" rx="2" fill="#3a7ccc"/>
<rect x="790.5" y="843" width="10" height="7" fill="#fff" stroke="#3a7ccc" stroke-width="1.2"/>
<!-- dropdown -->
<rect x="821.5" y="834.5" width="92" height="19" fill="#fdfdfd" stroke="#9a9a9a" stroke-width="1"/>
<rect x="898" y="835" width="15" height="18" fill="#cbcbcb"/>
<polygon points="902.5,842.5 908.5,842.5 905.5,845.5" fill="#444"/>
<text x="823.5" y="849" font-family="Liberation Sans" font-size="12.5" fill="#000">全部</text>
<!-- 61.495 mm -->
<text x="1338" y="811" font-family="Liberation Mono" font-size="11.5" fill="#333" textLength="58" lengthAdjust="spacingAndGlyphs">61.495 mm</text>
<!-- orange badge -->
<circle cx="1441" cy="723" r="21" fill="#b8b8b8" opacity="0.5"/><circle cx="1440" cy="722" r="20.5" fill="#f6f6f6" stroke="#c8c8c8" stroke-width="1"/>
<circle cx="1440" cy="722" r="17.5" fill="#f08a30"/>
<text x="1426" y="727" font-family="Liberation Serif" font-weight="bold" font-size="13" fill="#fff">61</text>
<!-- M icon -->
<circle cx="1406.5" cy="843" r="12.5" fill="none" stroke="#1a8ab8" stroke-width="2.2"/>
<text x="1406.5" y="850" text-anchor="middle" font-family="Liberation Sans" font-weight="bold" font-size="15" fill="#1a88b0">M</text>
<!-- IME bar -->
<rect x="1278" y="846" width="162" height="23.5" fill="#fafcff" stroke="#b8c8dc" stroke-width="1"/>
<g transform="rotate(-12 1268 857)"><rect x="1256" y="845" width="24" height="24" rx="4" fill="#f05a1a"/></g>
<text x="1268" y="865" text-anchor="middle" font-family="Liberation Sans" font-weight="bold" font-style="italic" font-size="20" fill="#fff">S</text>
<text x="1288" y="864" font-family="Liberation Sans" font-weight="bold" font-size="15" fill="#2a70c8">中</text>
<circle cx="1317" cy="858" r="6.5" fill="#2a70c8"/><circle cx="1321" cy="853.5" r="6" fill="#fafcff"/>
<circle cx="1334" cy="855.5" r="1.8" fill="none" stroke="#2a70c8" stroke-width="1"/>
<path d="M1339 858 Q1341 859 1338 863" stroke="#2a70c8" stroke-width="2" fill="none"/>
<rect x="1354" y="852" width="15" height="10" rx="1.5" fill="#2a70c8"/>
<g fill="#fff"><rect x="1356" y="854" width="2" height="1.5"/><rect x="1359.5" y="854" width="2" height="1.5"/><rect x="1363" y="854" width="2" height="1.5"/><rect x="1366" y="854" width="1.5" height="1.5"/><rect x="1356" y="857" width="2" height="1.5"/><rect x="1359.5" y="857" width="2" height="1.5"/><rect x="1363" y="857" width="2" height="1.5"/><rect x="1358" y="859.5" width="8" height="1.3"/></g>
<circle cx="1384" cy="853" r="2.6" fill="#a8b8c8"/>
<path d="M1379 864 Q1379 857 1384 857 Q1389 857 1389 864 Z" fill="#a8b8c8"/>
<text x="1385" y="866" font-family="Liberation Sans" font-weight="bold" font-size="8" fill="#a8b8c8">14</text>
<path d="M1400 853 L1404 850.5 H1409 L1413 853 L1411 856 H1409.5 V865 H1403.5 V856 H1402 Z" fill="#2a70c8"/>
<path d="M1422 864 L1430 856 M1428 852 A4 4 0 1 0 1434 856 L1431 855 L1430 852 Z" stroke="#2a70c8" stroke-width="2.2" fill="#2a70c8" stroke-linecap="round"/>

</svg>
</body></html>
